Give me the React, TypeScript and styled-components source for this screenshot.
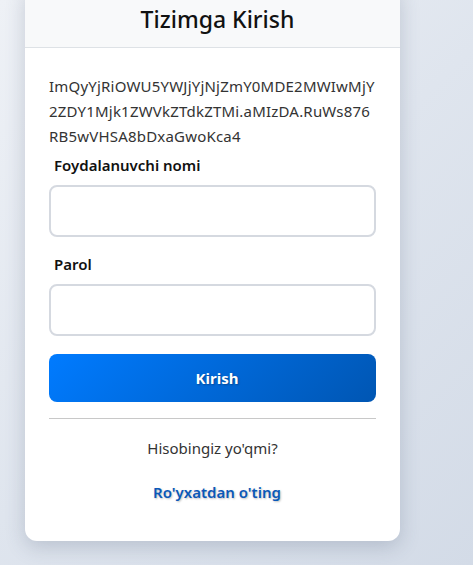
import React, { useState } from 'react';
import styled, { createGlobalStyle } from 'styled-components';

const GlobalStyle = createGlobalStyle`
  html, body {
    margin: 0;
    padding: 0;
    height: 100%;
  }
  body {
    font-family: 'Noto Sans', 'Open Sans', sans-serif;
    background: linear-gradient(135deg, #eef1f6 0%, #dfe5ee 50%, #d3dbe7 100%);
    overflow: hidden;
  }
`;

const Page = styled.div`
  min-height: 565px;
  padding-left: 25px;
`;

const Card = styled.div`
  width: 375px;
  margin-top: -16px;
  background: #fff;
  border-radius: 12px;
  box-shadow: 0 6px 20px rgba(60, 72, 100, 0.22);
  overflow: hidden;
`;

const Header = styled.div`
  background: #f8f9fa;
  border-bottom: 1px solid #dee2e6;
  height: 64px;
  box-sizing: border-box;
  padding: 7px 0 0 10px;
  display: flex;
  align-items: center;
  justify-content: center;
`;

const Title = styled.h2`
  margin: 0;
  font-size: 23px;
  font-weight: 500;
  color: #111;
`;

const Body = styled.div`
  padding: 26px 24px 39px;
`;

const Token = styled.p`
  margin: 0;
  font-size: 15px;
  line-height: 25px;
  color: #333;
  letter-spacing: 0.2px;
`;

const TokenLine = styled.span`
  display: block;
  white-space: nowrap;
`;

const Field = styled.div`
  display: flex;
  flex-direction: column;
  margin-bottom: ${props => (props.$last ? '18px' : '11px')};
`;

const Label = styled.label`
  font-size: 15px;
  font-weight: 600;
  color: #111;
  margin: 6px 0 10px 5px;
`;

const Input = styled.input`
  height: 52px;
  box-sizing: border-box;
  border: 2px solid #d5d9e0;
  border-radius: 8px;
  padding: 0 12px;
  font-size: 15px;
  outline: none;
`;

const SubmitButton = styled.button`
  width: 100%;
  height: 48px;
  border: none;
  border-radius: 8px;
  padding: 0 0 0 9px;
  background: linear-gradient(135deg, #007bff 0%, #0056b3 100%);
  color: #fff;
  font-family: inherit;
  font-size: 15px;
  font-weight: 700;
  text-shadow: 1px 1px 2px rgba(0, 0, 0, 0.3);
  cursor: pointer;
`;

const Divider = styled.hr`
  border: none;
  border-top: 1px solid #c8c8c8;
  margin: 16px 0 19px;
`;

const Footer = styled.div`
  display: flex;
  flex-direction: column;
  align-items: center;
  gap: 24px;
`;

const Question = styled.span`
  font-size: 15px;
  color: #333;
`;

const RegisterLink = styled.a`
  font-size: 15px;
  font-weight: 600;
  color: #0a58b8;
  padding-left: 9px;
  text-decoration: none;
  text-shadow: 1px 1px 2px rgba(0, 0, 0, 0.25);
  cursor: pointer;
`;

const token = [
  'ImQyYjRiOWU5YWJjYjNjZmY0MDE2MWIwMjY',
  '2ZDY1Mjk1ZWVkZTdkZTMi.aMIzDA.RuWs876',
  'RB5wVHSA8bDxaGwoKca4',
];

export default function App() {
  const [username, setUsername] = useState('');
  const [password, setPassword] = useState('');

  return (
    <>
      <GlobalStyle />
      <Page>
        <Card>
          <Header>
            <Title>Tizimga Kirish</Title>
          </Header>
          <Body>
            <Token>
              {token.map(line => (
                <TokenLine key={line}>{line}</TokenLine>
              ))}
            </Token>
            <Field>
              <Label>Foydalanuvchi nomi</Label>
              <Input value={username} onChange={e => setUsername(e.target.value)} />
            </Field>
            <Field $last>
              <Label>Parol</Label>
              <Input
                type="password"
                value={password}
                onChange={e => setPassword(e.target.value)}
              />
            </Field>
            <SubmitButton type="button">Kirish</SubmitButton>
            <Divider />
            <Footer>
              <Question>Hisobingiz yo'qmi?</Question>
              <RegisterLink>Ro'yxatdan o'ting</RegisterLink>
            </Footer>
          </Body>
        </Card>
      </Page>
    </>
  );
}
